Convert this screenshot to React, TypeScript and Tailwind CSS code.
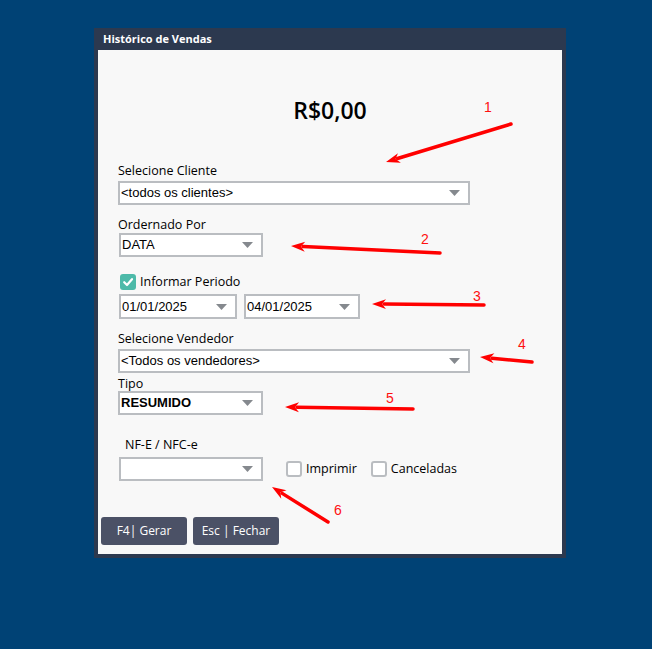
import React from "react";

const LABEL = "font-['Open_Sans',sans-serif] text-[12.5px] font-medium leading-4 text-black";
const FIELD = "font-['Liberation_Sans',Arial,sans-serif] text-[13px] text-black";

function Caret() {
  return (
    <svg width="11" height="6" viewBox="0 0 11 6" className="shrink-0">
      <path d="M0 0 L11 0 L5.5 6 Z" fill="#85898e" />
    </svg>
  );
}

function SelectBox({
  value,
  width,
  height = 24,
  bold,
  className = "",
}: {
  value: string;
  width: number;
  height?: number;
  bold?: boolean;
  className?: string;
}) {
  return (
    <div
      className={`flex items-center justify-between border-2 border-[#babdc1] bg-white pl-[1px] pr-[8px] ${className}`}
      style={{ width, height }}
    >
      <span className={`${FIELD} ${bold ? "font-bold" : ""} whitespace-nowrap`}>{value}</span>
      <Caret />
    </div>
  );
}

function Check({ checked, label }: { checked?: boolean; label: string }) {
  return (
    <label className="flex items-center gap-[4px]">
      {checked ? (
        <span className="flex h-[16px] w-[16px] items-center justify-center rounded-[3px] bg-[#4dbaa9]">
          <svg width="12" height="12" viewBox="0 0 12 12">
            <path d="M2.2 6.2 L5 9 L10 3.2" fill="none" stroke="#fff" strokeWidth="2.2" strokeLinecap="round" strokeLinejoin="round" />
          </svg>
        </span>
      ) : (
        <span className="h-[16px] w-[16px] rounded-[3px] border-2 border-[#babdc1] bg-white" />
      )}
      <span className={LABEL}>{label}</span>
    </label>
  );
}

type Arrow = { tail: [number, number]; tip: [number, number]; n: string; at: [number, number] };

const ARROWS: Arrow[] = [
  { tail: [511, 124], tip: [386, 162], n: "1", at: [484, 112] },
  { tail: [440, 253], tip: [291, 246], n: "2", at: [421, 244] },
  { tail: [484, 305], tip: [372, 304], n: "3", at: [473, 301] },
  { tail: [532, 362], tip: [480, 357], n: "4", at: [518, 349] },
  { tail: [413, 409], tip: [285, 407], n: "5", at: [386, 403] },
  { tail: [328, 522], tip: [272, 487], n: "6", at: [334, 515] },
];

function ArrowMark({ a }: { a: Arrow }) {
  const [x1, y1] = a.tail;
  const [x2, y2] = a.tip;
  const dx = x2 - x1;
  const dy = y2 - y1;
  const len = Math.hypot(dx, dy);
  const ux = dx / len;
  const uy = dy / len;
  const headLen = 14;
  const half = 5;
  const bx = x2 - ux * headLen;
  const by = y2 - uy * headLen;
  const p1 = `${bx - uy * half},${by + ux * half}`;
  const p2 = `${bx + uy * half},${by - ux * half}`;
  return (
    <g>
      <line x1={x1} y1={y1} x2={bx + ux * 2} y2={by + uy * 2} stroke="#ff0000" strokeWidth="3.5" strokeLinecap="round" />
      <polygon points={`${x2},${y2} ${p1} ${bx + ux * 4},${by + uy * 4} ${p2}`} fill="#ff0000" />
      <text x={a.at[0]} y={a.at[1]} fill="#ff1010" fontSize="14" fontFamily="'Liberation Sans', Arial, sans-serif">
        {a.n}
      </text>
    </g>
  );
}

export default function App() {
  return (
    <div className="relative h-[649px] w-full overflow-hidden bg-[#004275] pt-[28px] pl-[94px]">
      <div className="flex h-[530px] w-[472px] flex-col bg-[#2c394f] px-[4px] pb-[4px]">
        <div className="flex h-[22px] items-center pl-[5px] pt-[1px] font-['Open_Sans',sans-serif] text-[11px] font-bold text-white">
          Histórico de Vendas
        </div>
        <div className="flex flex-1 flex-col bg-[#f8f8f8] pl-[20px]">
          <div className="mt-[45px] -ml-[20px] text-center font-['Open_Sans',sans-serif] text-[23px] font-semibold leading-[30px] text-black">
            R$0,00
          </div>

          <div className={`mt-[38px] ${LABEL}`}>Selecione Cliente</div>
          <SelectBox value="<todos os clientes>" width={352} className="mt-[2px]" />

          <div className={`mt-[12px] ${LABEL}`}>Ordernado Por</div>
          <SelectBox value="DATA" width={144} className="mt-[0px] ml-[1px]" />

          <div className="mt-[17px] ml-[2px]">
            <Check checked label="Informar Periodo" />
          </div>
          <div className="mt-[4px] ml-[1px] flex gap-[7px]">
            <SelectBox value="01/01/2025" width={118} height={25} />
            <SelectBox value="04/01/2025" width={116} height={25} />
          </div>

          <div className={`mt-[12px] ${LABEL}`}>Selecione Vendedor</div>
          <SelectBox value="<Todos os vendedores>" width={352} className="mt-[2px]" />

          <div className={`mt-[3px] ${LABEL}`}>Tipo</div>
          <SelectBox value="RESUMIDO" width={145} bold className="mt-[-1px]" />

          <div className={`mt-[22px] ml-[7px] ${LABEL}`}>NF-E / NFC-e</div>
          <div className="mt-[4px] ml-[1px] flex items-center">
            <SelectBox value="" width={144} />
            <div className="ml-[23px] flex items-center gap-[14px]">
              <Check label="Imprimir" />
              <Check label="Canceladas" />
            </div>
          </div>

          <div className="mt-[36px] -ml-[17px] flex gap-[6px]">
            <button className="h-[28px] w-[86px] rounded-[3px] bg-[#4b5166] font-['Open_Sans',sans-serif] text-[12px] text-white">
              F4| Gerar
            </button>
            <button className="h-[28px] w-[86px] rounded-[3px] bg-[#4b5166] font-['Open_Sans',sans-serif] text-[12px] text-white">
              Esc | Fechar
            </button>
          </div>
        </div>
      </div>

      <svg className="pointer-events-none absolute left-0 top-0" width="652" height="649">
        {ARROWS.map((a) => (
          <ArrowMark key={a.n} a={a} />
        ))}
      </svg>
    </div>
  );
}
